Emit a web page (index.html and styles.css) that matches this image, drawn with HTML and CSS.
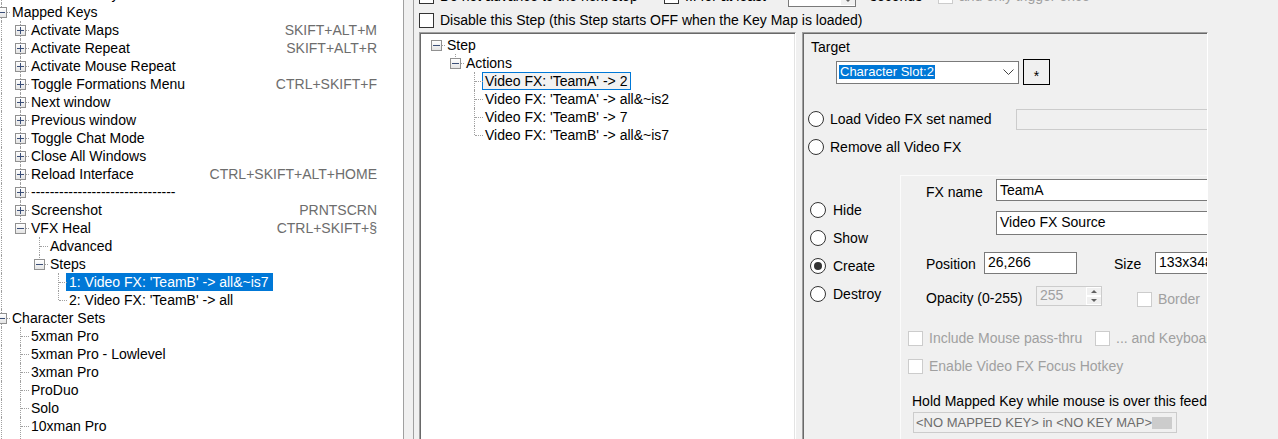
FILE: index.html
```html
<!DOCTYPE html>
<html lang="en">
<head>
    <meta charset="UTF-8">
    <title>Key Map Editor - VFX Heal</title>
    <link rel="stylesheet" href="styles.css">
</head>
<body>
<div class="app">

    <!-- Key map tree -->
    <div class="nav-tree">
        <div class="tree-scroll">
            <div class="node"><span class="cell v h"></span><span class="label">Default Main Key</span></div>
            <div class="node"><span class="cell v h"><i class="toggle"></i></span><span class="label">Mapped Keys</span></div>
            <div class="node"><span class="cell v"></span><span class="cell v h"><i class="toggle plus"></i></span><span class="label">Activate Maps</span><span class="keys">SKIFT+ALT+M</span></div>
            <div class="node"><span class="cell v"></span><span class="cell v h"><i class="toggle plus"></i></span><span class="label">Activate Repeat</span><span class="keys">SKIFT+ALT+R</span></div>
            <div class="node"><span class="cell v"></span><span class="cell v h"><i class="toggle plus"></i></span><span class="label">Activate Mouse Repeat</span></div>
            <div class="node"><span class="cell v"></span><span class="cell v h"><i class="toggle plus"></i></span><span class="label">Toggle Formations Menu</span><span class="keys">CTRL+SKIFT+F</span></div>
            <div class="node"><span class="cell v"></span><span class="cell v h"><i class="toggle plus"></i></span><span class="label">Next window</span></div>
            <div class="node"><span class="cell v"></span><span class="cell v h"><i class="toggle plus"></i></span><span class="label">Previous window</span></div>
            <div class="node"><span class="cell v"></span><span class="cell v h"><i class="toggle plus"></i></span><span class="label">Toggle Chat Mode</span></div>
            <div class="node"><span class="cell v"></span><span class="cell v h"><i class="toggle plus"></i></span><span class="label">Close All Windows</span></div>
            <div class="node"><span class="cell v"></span><span class="cell v h"><i class="toggle plus"></i></span><span class="label">Reload Interface</span><span class="keys">CTRL+SKIFT+ALT+HOME</span></div>
            <div class="node"><span class="cell v"></span><span class="cell v h"><i class="toggle plus"></i></span><span class="label">-------------------------------</span></div>
            <div class="node"><span class="cell v"></span><span class="cell v h"><i class="toggle plus"></i></span><span class="label">Screenshot</span><span class="keys">PRNTSCRN</span></div>
            <div class="node"><span class="cell v"></span><span class="cell up h"><i class="toggle"></i></span><span class="label">VFX Heal</span><span class="keys">CTRL+SKIFT+§</span></div>
            <div class="node"><span class="cell v"></span><span class="cell"></span><span class="cell v h"></span><span class="label">Advanced</span></div>
            <div class="node"><span class="cell v"></span><span class="cell"></span><span class="cell up h"><i class="toggle"></i></span><span class="label">Steps</span></div>
            <div class="node"><span class="cell v"></span><span class="cell"></span><span class="cell"></span><span class="cell v h"></span><span class="label selected">1: Video FX: 'TeamB' -&gt; all&amp;~is7</span></div>
            <div class="node"><span class="cell v"></span><span class="cell"></span><span class="cell"></span><span class="cell up h"></span><span class="label">2: Video FX: 'TeamB' -&gt; all</span></div>
            <div class="node"><span class="cell v h"><i class="toggle"></i></span><span class="label">Character Sets</span></div>
            <div class="node"><span class="cell v"></span><span class="cell v h"></span><span class="label">5xman Pro</span></div>
            <div class="node"><span class="cell v"></span><span class="cell v h"></span><span class="label">5xman Pro - Lowlevel</span></div>
            <div class="node"><span class="cell v"></span><span class="cell v h"></span><span class="label">3xman Pro</span></div>
            <div class="node"><span class="cell v"></span><span class="cell v h"></span><span class="label">ProDuo</span></div>
            <div class="node"><span class="cell v"></span><span class="cell v h"></span><span class="label">Solo</span></div>
            <div class="node last"><span class="cell v"></span><span class="cell v h"></span><span class="label">10xman Pro</span></div>
        </div>
    </div>

    <!-- Step editor -->
    <div class="editor">
        <div class="step-panel">
            <div class="opt-row">
                <label class="opt opt-advance"><span class="check"></span>Do not advance to the next step</label>
                <label class="opt opt-wait"><span class="check"></span>... for at least</label>
                <div class="numeric"><span class="num-value"></span><span class="spin"><i class="spin-up"></i><i class="spin-down"></i></span></div>
                <span class="seconds">seconds</span>
                <label class="opt disabled"><span class="check"></span>and only trigger once</label>
            </div>
            <div class="opt-row">
                <label class="opt"><span class="check"></span>Disable this Step (this Step starts OFF when the Key Map is loaded)</label>
            </div>

            <div class="step-body">
                <div class="action-tree">
                    <div class="node"><span class="cell h"><i class="toggle"></i></span><span class="label">Step</span></div>
                    <div class="node"><span class="cell"></span><span class="cell up h"><i class="toggle"></i></span><span class="label">Actions</span></div>
                    <div class="node"><span class="cell"></span><span class="cell"></span><span class="cell v h"></span><span class="label focused">Video FX: 'TeamA' -&gt; 2</span></div>
                    <div class="node"><span class="cell"></span><span class="cell"></span><span class="cell v h"></span><span class="label">Video FX: 'TeamA' -&gt; all&amp;~is2</span></div>
                    <div class="node"><span class="cell"></span><span class="cell"></span><span class="cell v h"></span><span class="label">Video FX: 'TeamB' -&gt; 7</span></div>
                    <div class="node"><span class="cell"></span><span class="cell"></span><span class="cell up h"></span><span class="label">Video FX: 'TeamB' -&gt; all&amp;~is7</span></div>
                </div>

                <div class="action-panel">
                    <div class="target-label">Target</div>
                    <div class="target-row">
                        <div class="combo">
                            <span class="combo-text">Character Slot:2</span>
                            <svg class="chevron" width="11" height="6" viewBox="0 0 11 6"><polyline points="0.5,0.5 5.5,5.5 10.5,0.5" fill="none" stroke="#444" stroke-width="1"/></svg>
                        </div>
                        <button class="star-btn">*</button>
                    </div>

                    <div class="radio-row">
                        <span class="radio"></span><span class="load-label">Load Video FX set named</span>
                        <span class="textbox disabled-box load-box"></span>
                    </div>
                    <div class="radio-row">
                        <span class="radio"></span><span>Remove all Video FX</span>
                    </div>

                    <div class="fx-section">
                        <div class="mode-list">
                            <div class="radio-row"><span class="radio"></span>Hide</div>
                            <div class="radio-row"><span class="radio"></span>Show</div>
                            <div class="radio-row"><span class="radio checked"></span>Create</div>
                            <div class="radio-row"><span class="radio"></span>Destroy</div>
                        </div>

                        <div class="fx-group">
                            <div class="field-row">
                                <span class="field-label name-label">FX name</span>
                                <span class="textbox name-box">TeamA</span>
                            </div>
                            <div class="field-row source-row">
                                <span class="textbox source-box">Video FX Source</span>
                            </div>
                            <div class="field-row pos-row">
                                <span class="field-label pos-label">Position</span>
                                <span class="textbox pos-box">26,266</span>
                                <span class="field-label size-label">Size</span>
                                <span class="textbox size-box">133x348</span>
                            </div>
                            <div class="field-row opacity-row">
                                <span class="field-label opacity-label">Opacity (0-255)</span>
                                <div class="numeric disabled-box opacity-box"><span class="num-value">255</span><span class="spin"><i class="spin-up"></i><i class="spin-down"></i></span></div>
                                <label class="opt disabled border-opt"><span class="check"></span>Border</label>
                            </div>
                            <div class="check-row">
                                <label class="opt disabled passthru-opt"><span class="check"></span>Include Mouse pass-thru</label>
                                <label class="opt disabled"><span class="check"></span>... and Keyboard pass-thru</label>
                            </div>
                            <div class="check-row hotkey-row">
                                <label class="opt disabled"><span class="check"></span>Enable Video FX Focus Hotkey</label>
                            </div>
                            <div class="hold-label">Hold Mapped Key while mouse is over this feed</div>
                            <div class="key-box">
                                <span>&lt;NO MAPPED KEY&gt; in &lt;NO KEY MAP&gt;</span>
                                <span class="swatch"></span>
                            </div>
                        </div>
                    </div>
                </div>
            </div>
        </div>
    </div>
</div>
</body>
</html>
```

FILE: styles.css
```css
body {
    margin: 0;
    font-family: "Liberation Sans", Arial, sans-serif;
    font-size: 14px;
    color: #000;
    background-color: #f0f0f0;
    overflow: hidden;
}
.app {
    display: flex;
    height: 439px;
    overflow: hidden;
}

/* Tree views */
.nav-tree {
    width: 403px;
    flex: none;
    background: #fff;
    border-right: 1px solid #a0a0a0;
    overflow: hidden;
}
.tree-scroll {
    margin-top: -15px;
    margin-left: -9px;
    padding-right: 26px;
}
.node {
    display: flex;
    height: 18px;
    line-height: 18px;
    white-space: nowrap;
}
.node.last {
    height: 30px;
}
.cell {
    width: 19px;
    height: 18px;
    flex: none;
    position: relative;
}
.v::before, .up::before {
    content: "";
    position: absolute;
    left: 10px;
    top: 0;
    height: 100%;
    border-left: 1px dotted #a0a0a0;
}
.node.last .cell {
    height: 30px;
}
.up::before {
    height: 9px;
}
.h::after {
    content: "";
    position: absolute;
    left: 11px;
    top: 9px;
    width: 8px;
    border-top: 1px dotted #a0a0a0;
}
.toggle {
    position: absolute;
    left: 5px;
    top: 4px;
    width: 9px;
    height: 9px;
    border: 1px solid #919191;
    background: linear-gradient(#ffffff, #e4e4e4);
    z-index: 1;
}
.toggle::before {
    content: "";
    position: absolute;
    left: 1px;
    top: 4px;
    width: 7px;
    height: 1px;
    background: #3b4f78;
}
.toggle.plus::after {
    content: "";
    position: absolute;
    left: 4px;
    top: 1px;
    width: 1px;
    height: 7px;
    background: #3b4f78;
}
.label {
    padding: 0 4px 0 2px;
    height: 18px;
}
.label.selected {
    background: #0078d7;
    color: #fff;
    margin-left: -1px;
    padding-left: 3px;
}
.label.focused {
    background: #f2f2f2;
    box-shadow: inset 0 0 0 1px #0078d7;
    margin-left: -1px;
    padding-left: 3px;
}
.keys {
    margin-left: auto;
    color: #6d6d6d;
}

/* Editor */
.editor {
    flex: 1;
    display: flex;
    padding-left: 9px;
    overflow: hidden;
}
.step-panel {
    flex: 1;
    border-left: 1px solid #a0a0a0;
    padding-left: 5px;
    margin-top: -16px;
}
.opt-row {
    display: flex;
    align-items: center;
    height: 24px;
    white-space: nowrap;
}
.opt {
    display: flex;
    align-items: center;
    white-space: nowrap;
}
.check {
    width: 13px;
    height: 13px;
    border: 1px solid #333;
    background: #fff;
    margin-right: 6px;
    flex: none;
}
.opt.disabled {
    color: #a0a0a0;
}
.opt.disabled .check {
    border-color: #cccccc;
}
.opt-advance {
    width: 245px;
}
.opt-wait {
    width: 124px;
}
.numeric {
    width: 68px;
    height: 21px;
    box-sizing: border-box;
    border: 1px solid #7a7a7a;
    background: #fff;
    display: flex;
}
.num-value {
    flex: 1;
    padding-left: 3px;
    line-height: 16px;
}
.spin {
    width: 15px;
    display: flex;
    flex-direction: column;
}
.spin i {
    flex: 1;
    position: relative;
    background: #f0f0f0;
    border: 1px solid #fff;
    border-right: 0;
}
.spin i::after {
    content: "";
    position: absolute;
    left: 4px;
    top: 2px;
    border-left: 3px solid transparent;
    border-right: 3px solid transparent;
}
.spin-up::after {
    border-bottom: 3px solid #606060;
}
.spin-down::after {
    border-top: 3px solid #606060;
}
.seconds {
    width: 68px;
    margin-left: 14px;
}

.step-body {
    display: flex;
    align-items: flex-start;
}
.action-tree {
    width: 377px;
    height: 430px;
    flex: none;
    box-sizing: border-box;
    border: 1px solid;
    border-color: #a0a0a0 #fff #fff #a0a0a0;
    box-shadow: inset 1px 1px 0 #696969, inset -1px -1px 0 #e3e3e3;
    background: #fff;
    padding: 3px 0 0 6px;
}
.action-panel {
    width: 406px;
    height: 430px;
    flex: none;
    margin-left: 6px;
    box-sizing: border-box;
    border: 1px solid;
    border-color: #a0a0a0 #fff #fff #a0a0a0;
    box-shadow: inset 1px 1px 0 #696969;
    padding: 1px 1px 0 1px;
    overflow: hidden;
    white-space: nowrap;
}
.target-label {
    margin: 4px 0 0 7px;
    line-height: 18px;
}
.target-row {
    display: flex;
    align-items: center;
    margin: 3px 0 0 32px;
    height: 26px;
}
.combo {
    width: 183px;
    height: 23px;
    box-sizing: border-box;
    border: 1px solid #7a7a7a;
    background: #fff;
    display: flex;
    align-items: center;
    padding: 0 4px 0 2px;
}
.combo-text {
    background: #0078d7;
    color: #fff;
    font-size: 13px;
    line-height: 14px;
    padding: 0 1px;
}
.chevron {
    margin-left: auto;
}
.star-btn {
    display: block;
    width: 27px;
    height: 26px;
    margin-left: 4px;
    box-sizing: border-box;
    border: 1px solid #000;
    background: #f0f0f0;
    font: inherit;
    line-height: 18px;
    padding: 7px 0 0;
    text-align: center;
}
.radio-row {
    display: flex;
    align-items: center;
    height: 28px;
    padding-left: 4px;
}
.target-row + .radio-row {
    margin-top: 20px;
}
.radio {
    width: 14px;
    height: 14px;
    border: 1px solid #333;
    border-radius: 50%;
    background: #fff;
    margin-right: 6px;
    flex: none;
    position: relative;
}
.radio.checked::after {
    content: "";
    position: absolute;
    left: 3px;
    top: 3px;
    width: 8px;
    height: 8px;
    border-radius: 50%;
    background: #333;
}
.load-label {
    width: 186px;
    flex: none;
}
.textbox {
    display: block;
    box-sizing: border-box;
    border: 1px solid #7a7a7a;
    background: #fff;
    padding: 0 3px;
    line-height: 18px;
    flex: none;
}
.disabled-box {
    border-color: #cccccc;
    background: #f0f0f0;
    color: #a0a0a0;
}
.load-box {
    width: 200px;
    height: 21px;
}

.fx-section {
    display: flex;
    margin-top: 14px;
}
.mode-list {
    width: 96px;
    flex: none;
    padding-top: 21px;
}
.mode-list .radio-row {
    padding-left: 6px;
}
.mode-list .radio {
    margin-right: 7px;
}
.fx-group {
    flex: 1;
    border-top: 1px solid #fbfbfb;
    border-left: 1px solid #fbfbfb;
    padding-top: 3px;
    height: 300px;
}
.field-row {
    display: flex;
    align-items: flex-start;
    margin-left: 25px;
}
.field-label {
    margin-top: 4px;
    line-height: 18px;
}
.name-label {
    width: 70px;
}
.name-box {
    width: 230px;
    height: 22px;
    padding-top: 1px;
}
.source-row {
    margin-top: 10px;
    padding-left: 70px;
}
.source-box {
    width: 230px;
    height: 24px;
    padding-top: 1px;
}
.pos-row {
    margin-top: 17px;
}
.pos-label {
    width: 58px;
    margin-top: 3px;
}
.pos-box {
    width: 93px;
    height: 22px;
}
.size-label {
    width: 41px;
    margin-left: 37px;
    margin-top: 3px;
}
.size-box {
    width: 90px;
    height: 22px;
}
.opacity-row {
    margin-top: 12px;
}
.opacity-label {
    width: 110px;
    margin-top: 3px;
}
.opacity-box {
    width: 66px;
    height: 20px;
}
.border-opt {
    margin: 5px 0 0 35px;
}
.check-row {
    display: flex;
    align-items: center;
    height: 18px;
    margin: 22px 0 0 7px;
}
.hotkey-row {
    margin-top: 10px;
}
.passthru-opt {
    width: 187px;
}
.hold-label {
    margin: 17px 0 0 11px;
    line-height: 18px;
}
.key-box {
    display: flex;
    align-items: center;
    width: 264px;
    height: 21px;
    box-sizing: border-box;
    margin: 2px 0 0 12px;
    border: 1px solid #cccccc;
    background: #f0f0f0;
    color: #6d6d6d;
    padding-left: 2px;
    font-size: 13px;
    line-height: 18px;
}
.swatch {
    margin-left: auto;
    margin-right: 4px;
    width: 20px;
    height: 12px;
    background: #cccccc;
}
```
